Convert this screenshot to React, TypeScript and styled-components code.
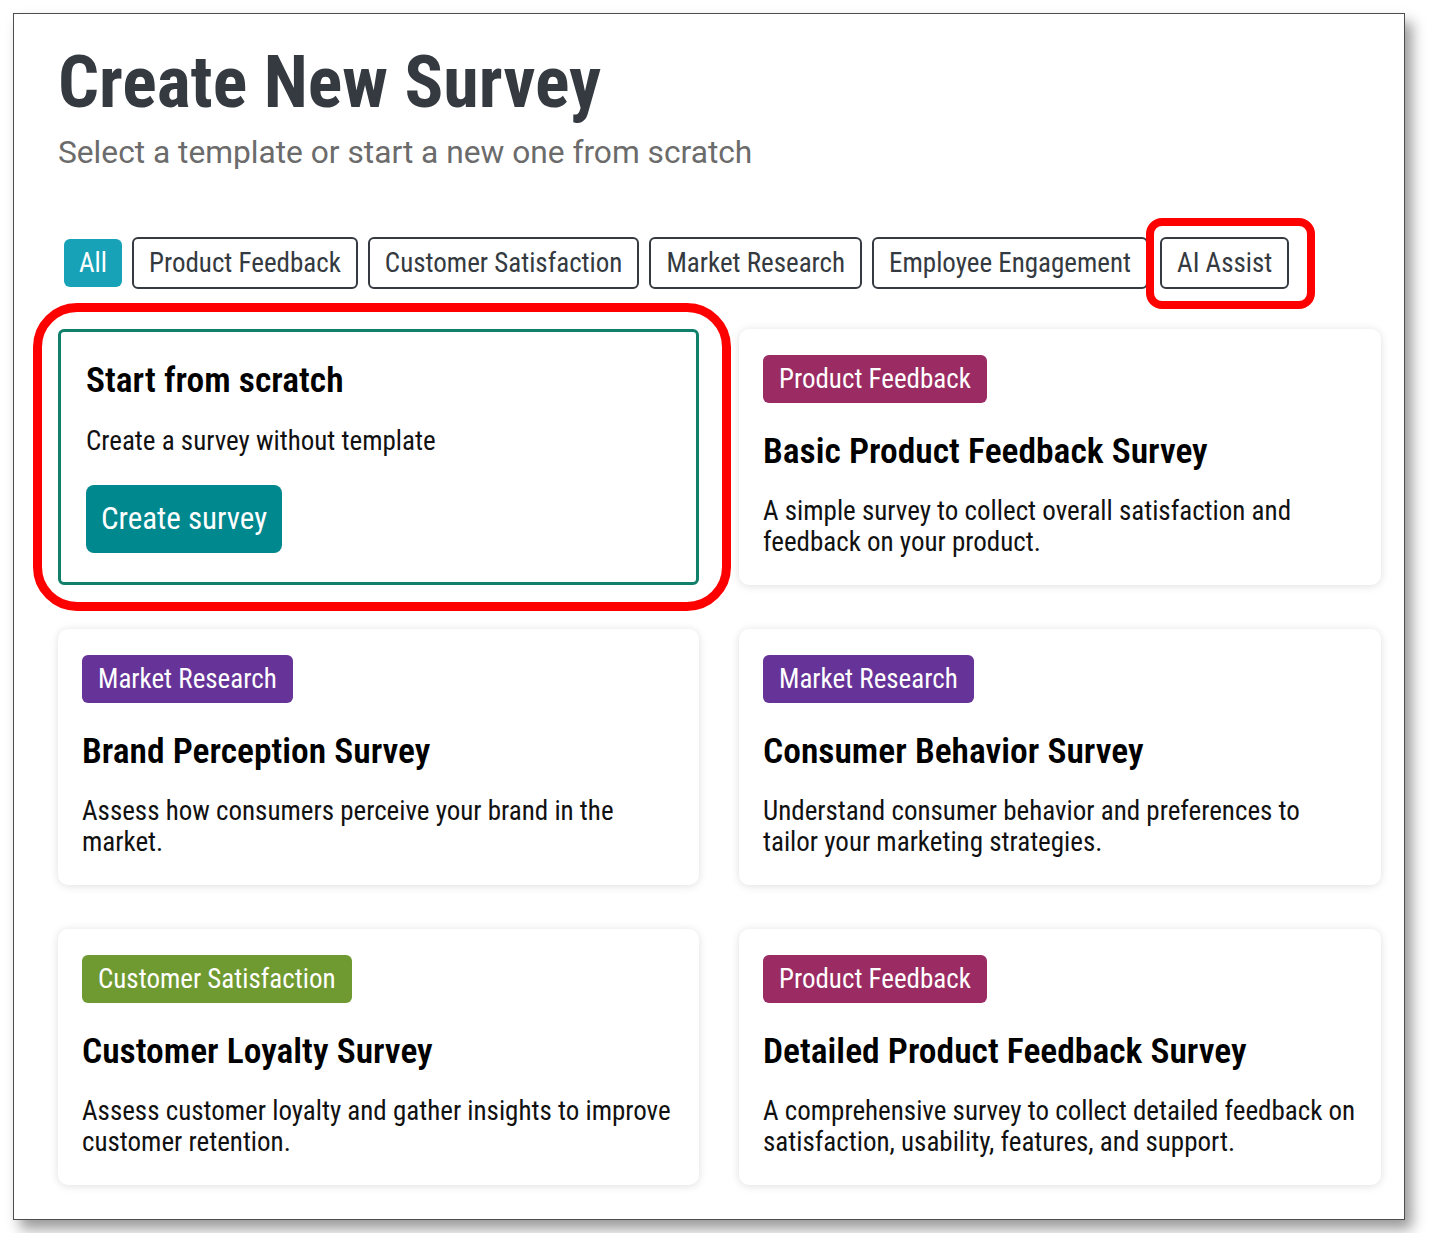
import React from "react";
import styled, { createGlobalStyle } from "styled-components";

const GlobalStyle = createGlobalStyle`
  html, body { margin: 0; padding: 0; background: #ffffff; }
  body { font-family: "Roboto Condensed", Roboto, "Liberation Sans", sans-serif; color: #111; }
  * { box-sizing: border-box; }
`;

const Page = styled.div`
  padding: 13px;
`;

const Frame = styled.main`
  width: 1392px;
  height: 1207px;
  border: 1px solid #4d4d4d;
  background: #fff;
  box-shadow: 7px 9px 13px rgba(0, 0, 0, 0.4);
  padding: 27px 23px 33px 44px;
  display: flex;
  flex-direction: column;
`;

const Header = styled.header`
  display: flex;
  flex-direction: column;
  gap: 9px;
`;

const Title = styled.h1`
  margin: 0;
  font-size: 72px;
  line-height: 84px;
  font-weight: 700;
  color: #343a40;
`;

const Subtitle = styled.p`
  margin: 0;
  font-family: Roboto, "Liberation Sans", sans-serif;
  font-size: 31.7px;
  line-height: 38px;
  color: #6b6b6b;
`;

const FilterBar = styled.nav`
  margin-top: 65px;
  display: flex;
  align-items: center;
  gap: 10px;
  height: 52px;
`;

const FilterButton = styled.button<{ $active?: boolean }>`
  height: ${(p) => (p.$active ? "48px" : "52px")};
  margin-left: ${(p) => (p.$active ? "6px" : "0")};
  padding: 0 15px;
  border: ${(p) => (p.$active ? "none" : "2px solid #343a40")};
  border-radius: 6px;
  background: ${(p) => (p.$active ? "#17a2b8" : "#fff")};
  color: ${(p) => (p.$active ? "#fff" : "#343a40")};
  font-family: inherit;
  font-size: 27px;
  line-height: 30px;
  white-space: nowrap;
  cursor: pointer;
`;

const AiWrap = styled.div`
  position: relative;
  margin-left: 2px;
  display: flex;
`;

const AiHighlight = styled.span`
  position: absolute;
  inset: -19px -26px -20px -14px;
  border: 8px solid #ff0000;
  border-radius: 16px;
  pointer-events: none;
  z-index: 2;
`;

const Grid = styled.section`
  margin-top: 40px;
  display: grid;
  grid-template-columns: 641px 642px;
  grid-auto-rows: 256px;
  column-gap: 40px;
  row-gap: 44px;
`;

const Card = styled.article`
  background: #fff;
  border-radius: 10px;
  box-shadow: 0 1px 8px rgba(0, 0, 0, 0.13);
  padding: 26px 23px 24px 24px;
  display: flex;
  flex-direction: column;
  align-items: flex-start;
`;

const ScratchWrap = styled.div`
  position: relative;
  display: flex;
`;

const ScratchHighlight = styled.span`
  position: absolute;
  inset: -26px -32px -26px -25px;
  border: 9px solid #ff0000;
  border-radius: 44px;
  pointer-events: none;
  z-index: 2;
`;

const ScratchCard = styled.article`
  flex: 1;
  border: 3px solid #10806b;
  border-radius: 6px;
  background: #fff;
  padding: 27px 25px;
  display: flex;
  flex-direction: column;
  align-items: flex-start;
`;

const Badge = styled.span<{ $color: string }>`
  display: inline-flex;
  align-items: center;
  height: 48px;
  padding: 0 16px;
  border-radius: 6px;
  background: ${(p) => p.$color};
  color: #fff;
  font-size: 27px;
  line-height: 30px;
`;

const CardTitle = styled.h2<{ $top?: number }>`
  margin: ${(p) => p.$top ?? 27}px 0 0;
  font-size: 35.5px;
  line-height: 42px;
  font-weight: 600;
  color: #000;
`;

const CardText = styled.p<{ $top?: number }>`
  margin: ${(p) => p.$top ?? 24}px 0 0;
  font-size: 27px;
  line-height: 31px;
  color: #111;
`;

const CreateButton = styled.button`
  margin-top: 28px;
  height: 68px;
  padding: 0 15px;
  border: none;
  border-radius: 8px;
  background: #00888f;
  color: #fff;
  font-family: inherit;
  font-size: 31px;
  line-height: 36px;
  cursor: pointer;
`;

const filters = [
  "Product Feedback",
  "Customer Satisfaction",
  "Market Research",
  "Employee Engagement",
];

const categoryColor: Record<string, string> = {
  "Product Feedback": "#9b2c63",
  "Market Research": "#663399",
  "Customer Satisfaction": "#6f9a31",
};

const templates = [
  {
    category: "Product Feedback",
    title: "Basic Product Feedback Survey",
    text: "A simple survey to collect overall satisfaction and feedback on your product.",
  },
  {
    category: "Market Research",
    title: "Brand Perception Survey",
    text: "Assess how consumers perceive your brand in the market.",
  },
  {
    category: "Market Research",
    title: "Consumer Behavior Survey",
    text: "Understand consumer behavior and preferences to tailor your marketing strategies.",
  },
  {
    category: "Customer Satisfaction",
    title: "Customer Loyalty Survey",
    text: "Assess customer loyalty and gather insights to improve customer retention.",
  },
  {
    category: "Product Feedback",
    title: "Detailed Product Feedback Survey",
    text: "A comprehensive survey to collect detailed feedback on satisfaction, usability, features, and support.",
  },
];

export default function App() {
  return (
    <>
      <GlobalStyle />
      <Page>
        <Frame>
          <Header>
            <Title>Create New Survey</Title>
            <Subtitle>Select a template or start a new one from scratch</Subtitle>
          </Header>
          <FilterBar>
            <FilterButton $active>All</FilterButton>
            {filters.map((f) => (
              <FilterButton key={f}>{f}</FilterButton>
            ))}
            <AiWrap>
              <FilterButton>AI Assist</FilterButton>
              <AiHighlight />
            </AiWrap>
          </FilterBar>
          <Grid>
            <ScratchWrap>
              <ScratchCard>
                <CardTitle $top={0}>Start from scratch</CardTitle>
                <CardText $top={25}>Create a survey without template</CardText>
                <CreateButton>Create survey</CreateButton>
              </ScratchCard>
              <ScratchHighlight />
            </ScratchWrap>
            {templates.map((t) => (
              <Card key={t.title}>
                <Badge $color={categoryColor[t.category]}>{t.category}</Badge>
                <CardTitle>{t.title}</CardTitle>
                <CardText>{t.text}</CardText>
              </Card>
            ))}
          </Grid>
        </Frame>
      </Page>
    </>
  );
}
